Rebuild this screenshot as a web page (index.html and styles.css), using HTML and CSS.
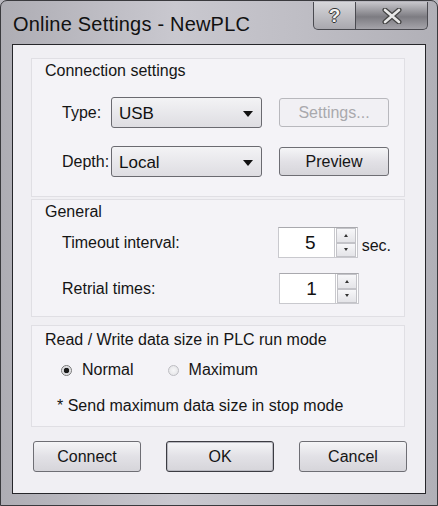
FILE: index.html
```html
<!DOCTYPE html>
<html lang="en">
    <head>
        <meta charset="UTF-8">
        <title>Online Settings - NewPLC</title>
        <link rel="stylesheet" href="styles.css">
    </head>
    <body>
        <div class="window">
            <div class="titlebar">
                <span class="title">Online Settings - NewPLC</span>
                <div class="caption-buttons">
                    <div class="cap-btn help">?</div>
                    <div class="cap-btn close">
                        <svg width="26" height="16" viewBox="0 0 26 16">
                            <path d="M6 2 L20 14 M20 2 L6 14" stroke="#444" stroke-width="5" stroke-linecap="round"/>
                            <path d="M6 2 L20 14 M20 2 L6 14" stroke="#e8e8e8" stroke-width="2.6" stroke-linecap="round"/>
                        </svg>
                    </div>
                </div>
            </div>
            <div class="client">
                <!-- Connection settings -->
                <div class="group group-conn">
                    <div class="legend">Connection settings</div>
                    <div class="row row-first">
                        <span class="label label-short">Type:</span>
                        <div class="combo"><span>USB</span><span class="arrow"></span></div>
                        <button class="btn btn-side" disabled>Settings...</button>
                    </div>
                    <div class="row row-second">
                        <span class="label label-short">Depth:</span>
                        <div class="combo"><span>Local</span><span class="arrow"></span></div>
                        <button class="btn btn-side">Preview</button>
                    </div>
                </div>

                <!-- General -->
                <div class="group group-general">
                    <div class="legend">General</div>
                    <div class="row row-spin-first">
                        <span class="label label-long">Timeout interval:</span>
                        <div class="spin">
                            <div class="spin-value">5</div>
                            <div class="spin-buttons">
                                <div class="spin-btn"><span class="tri-up"></span></div>
                                <div class="spin-btn"><span class="tri-down"></span></div>
                            </div>
                        </div>
                        <span class="unit">sec.</span>
                    </div>
                    <div class="row row-spin-second">
                        <span class="label label-long">Retrial times:</span>
                        <div class="spin">
                            <div class="spin-value">1</div>
                            <div class="spin-buttons">
                                <div class="spin-btn"><span class="tri-up"></span></div>
                                <div class="spin-btn"><span class="tri-down"></span></div>
                            </div>
                        </div>
                    </div>
                </div>

                <!-- Read / Write data size -->
                <div class="group group-size">
                    <div class="legend">Read / Write data size in PLC run mode</div>
                    <div class="radios">
                        <label class="radio"><span class="dot checked"></span>Normal</label>
                        <label class="radio"><span class="dot"></span>Maximum</label>
                    </div>
                    <div class="note">* Send maximum data size in stop mode</div>
                </div>

                <div class="actions">
                    <button class="btn btn-action">Connect</button>
                    <button class="btn btn-action btn-default">OK</button>
                    <button class="btn btn-action">Cancel</button>
                </div>
            </div>
        </div>
    </body>
</html>
```

FILE: styles.css
```css
/* Page and window frame */
body {
    margin: 0;
    font-family: "Liberation Sans", Arial, sans-serif;
    background-color: #b9b8bf;
}

.window {
    width: 438px;
    height: 506px;
    box-sizing: border-box;
    padding: 0 11px 12px 11px;
    background: linear-gradient(to right, #aeadb4, #c9c8cf 40%, #bebdc4 70%, #b1b0b7);
    border: 1px solid #3a3a3e;
    border-radius: 7px 7px 0 0;
}

/* Title bar */
.titlebar {
    height: 43px;
    display: flex;
    justify-content: space-between;
    align-items: flex-start;
}

.title {
    font-size: 20px;
    color: #111;
    margin-top: 12px;
    margin-left: 1px;
    letter-spacing: 0.2px;
}

.caption-buttons {
    display: flex;
    margin-top: 1px;
    margin-right: -2px;
}

.cap-btn {
    height: 28px;
    box-sizing: border-box;
    border: 1px solid #4a4a50;
    border-top: none;
    display: flex;
    align-items: center;
    justify-content: center;
}

.help {
    width: 43px;
    border-radius: 0 0 0 5px;
    background: linear-gradient(#d6d6da, #a9a8ae);
    font-size: 19px;
    font-weight: bold;
    color: #f2f2f2;
    text-shadow: 1px 0 0 #333, -1px 0 0 #333, 0 1px 0 #333, 0 -1px 0 #333;
}

.close {
    width: 72px;
    border-left: none;
    border-radius: 0 0 5px 0;
    background: linear-gradient(#c7c6cb, #7d7c82 55%, #a5a4aa);
}

/* Client area */
.client {
    height: 450px;
    box-sizing: border-box;
    border: 1px solid #26262a;
    background-color: #f0eff3;
    padding: 13px 20px 0 18px;
}

/* Group boxes */
.group {
    box-sizing: border-box;
    border: 1px solid #e0dfe4;
    background-color: #f4f3f7;
    padding: 2px 13px 0 13px;
}

.group-conn {
    height: 139px;
}

.group-general {
    height: 118px;
    margin-top: 2px;
}

.group-size {
    height: 102px;
    margin-top: 8px;
    padding-top: 4px;
}

.legend {
    font-size: 16px;
    line-height: 20px;
    color: #151515;
}

.row {
    display: flex;
    align-items: center;
    padding-left: 17px;
}

.row-first {
    margin-top: 16px;
}

.row-second {
    margin-top: 18px;
}

.row-spin-first {
    margin-top: 5px;
}

.row-spin-second {
    margin-top: 15px;
}

.label {
    font-size: 16px;
    color: #151515;
}

.label-short {
    width: 49px;
}

.label-long {
    width: 217px;
}

/* Drop-down box */
.combo {
    width: 151px;
    height: 31px;
    box-sizing: border-box;
    border: 1px solid #6a6a70;
    border-radius: 3px;
    background: linear-gradient(#f3f3f5, #dedde2);
    display: flex;
    align-items: center;
    justify-content: space-between;
    padding: 2px 8px 0 7px;
    font-size: 17px;
    color: #111;
}

.arrow {
    width: 0;
    height: 0;
    border-left: 5px solid transparent;
    border-right: 5px solid transparent;
    border-top: 6px solid #111;
}

/* Buttons */
.btn {
    font-family: "Liberation Sans", Arial, sans-serif;
    font-size: 16px;
    color: #151515;
    box-sizing: border-box;
    border: 1px solid #6e6e74;
    border-radius: 3px;
    background: linear-gradient(#f5f5f7, #e2e1e6 50%, #d6d5da);
    padding: 0;
}

.btn:disabled {
    color: #a9a9ad;
    border-color: #b8b8bd;
    background: #f1f0f4;
}

.btn-side {
    width: 110px;
    height: 29px;
    margin-left: 17px;
}

/* Spin boxes */
.spin {
    width: 80px;
    height: 31px;
    display: flex;
    box-sizing: border-box;
    border: 1px solid #c9c9ce;
    border-top-color: #a9a9ae;
    background-color: #fff;
}

.spin-value {
    flex: 1;
    text-align: center;
    font-size: 19px;
    line-height: 29px;
    color: #111;
    padding-left: 8px;
}

.spin-buttons {
    width: 22px;
    display: flex;
    flex-direction: column;
    border-left: 1px solid #c9c9ce;
}

.spin-btn {
    flex: 1;
    display: flex;
    align-items: center;
    justify-content: center;
    border: 1px solid #c3c3c8;
    margin: 0 1px;
    background: linear-gradient(#f7f7f9, #e4e4e8);
}

.tri-up {
    border-left: 2px solid transparent;
    border-right: 2px solid transparent;
    border-bottom: 3px solid #333;
}

.tri-down {
    border-left: 2px solid transparent;
    border-right: 2px solid transparent;
    border-top: 3px solid #333;
}

.unit {
    font-size: 16px;
    color: #151515;
    margin-left: 4px;
    margin-top: 6px;
}

/* Radio buttons */
.radios {
    display: flex;
    margin-top: 11px;
    padding-left: 16px;
}

.radio {
    display: flex;
    align-items: center;
    font-size: 16px;
    color: #151515;
    margin-right: 34px;
}

.dot {
    width: 11px;
    height: 11px;
    border-radius: 50%;
    border: 1px solid #bdbdc2;
    background: radial-gradient(#f7f7f8, #e1e1e4);
    margin-right: 10px;
    box-sizing: border-box;
}

.dot.checked {
    border-color: #777;
    background: radial-gradient(#1a1a1a 0, #1a1a1a 2.5px, #d0d0d4 3px, #f4f4f6 5px);
}

.note {
    font-size: 16px;
    color: #151515;
    margin-top: 18px;
    padding-left: 12px;
}

/* Bottom action buttons */
.actions {
    display: flex;
    gap: 25px;
    margin-top: 14px;
    padding-left: 2px;
}

.btn-action {
    flex-shrink: 0;
    width: 108px;
    height: 31px;
}

.btn-default {
    border-color: #3c3c42;
    box-shadow: inset 0 0 0 1px #b9b9c0;
}
```
